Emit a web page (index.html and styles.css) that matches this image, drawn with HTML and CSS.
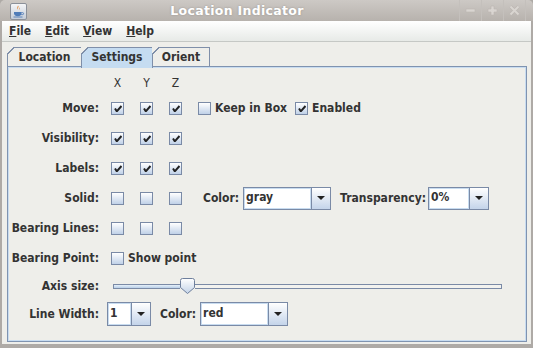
FILE: index.html
```html
<!DOCTYPE html>
<html lang="en">
<head>
    <meta charset="UTF-8">
    <title>Location Indicator</title>
    <link rel="stylesheet" href="styles.css">
</head>
<body>
    <div class="frame">
        <div class="titlebar">
            <div class="app-icon">
                <svg width="17" height="17" viewBox="0 0 17 17">
                    <defs>
                        <linearGradient id="ig" x1="0" y1="0" x2="0" y2="1">
                            <stop offset="0" stop-color="#f6f7f9"/>
                            <stop offset="1" stop-color="#c3cbd6"/>
                        </linearGradient>
                    </defs>
                    <rect x="0.5" y="0.5" width="16" height="16" rx="1.5" fill="url(#ig)" stroke="#8b9099"/>
                    <path d="M8 2.5c1.5 1.2-1 2.5 0.3 4c-1.8-0.8-0.6-2.6-0.3-4z" fill="#e07a1c"/>
                    <path d="M9.6 4.5c0.8 0.8-0.6 1.5 0.2 2.3c-1-0.4-0.5-1.4-0.2-2.3z" fill="#e07a1c"/>
                    <path d="M4 9h7.5v1.6c0 1.6-1.5 2.6-3.7 2.6s-3.8-1-3.8-2.6z" fill="#4f7cb8"/>
                    <path d="M11.4 9.6h1.2a1 1 0 0 1 0 2h-1.4" fill="none" stroke="#4f7cb8" stroke-width="0.9"/>
                    <path d="M3.5 14h9" stroke="#4f7cb8" stroke-width="0.9"/>
                </svg>
            </div>
            <div class="title">Location Indicator</div>
            <div class="wm-buttons">
                <div class="wm-btn">
                    <svg width="11" height="11" viewBox="0 0 11 11"><rect x="1" y="4" width="9" height="3" fill="#d9d5d1" stroke="#bcb7b2" stroke-width="0.6"/></svg>
                </div>
                <div class="wm-btn">
                    <svg width="11" height="11" viewBox="0 0 11 11"><path d="M4 1h3v3h3v3h-3v3h-3v-3h-3v-3h3z" fill="#d9d5d1" stroke="#bcb7b2" stroke-width="0.6"/></svg>
                </div>
                <div class="wm-btn">
                    <svg width="11" height="11" viewBox="0 0 11 11"><path d="M1.5 1.5l8 8M9.5 1.5l-8 8" stroke="#bcb7b2" stroke-width="3.2"/><path d="M1.5 1.5l8 8M9.5 1.5l-8 8" stroke="#d9d5d1" stroke-width="2"/></svg>
                </div>
                <div class="wm-btn end"></div>
            </div>
        </div>

        <div class="client">
            <div class="menubar">
                <span class="menu"><u>F</u>ile</span>
                <span class="menu"><u>E</u>dit</span>
                <span class="menu"><u>V</u>iew</span>
                <span class="menu"><u>H</u>elp</span>
            </div>

            <div class="tabs">
                <div class="tab tab-location">Location</div>
                <div class="tab tab-settings selected">Settings</div>
                <div class="tab tab-orient">Orient</div>
            </div>

            <div class="panel">
                <div class="row head">
                    <div class="lbl"></div>
                    <div class="cbs">
                        <span class="axis">X</span>
                        <span class="axis">Y</span>
                        <span class="axis">Z</span>
                    </div>
                </div>

                <div class="row">
                    <div class="lbl">Move:</div>
                    <div class="cbs">
                        <span class="cb on"></span>
                        <span class="cb on"></span>
                        <span class="cb on"></span>
                    </div>
                    <label class="opt keep"><span class="cb"></span>Keep in Box</label>
                    <label class="opt enabled"><span class="cb on"></span>Enabled</label>
                </div>

                <div class="row">
                    <div class="lbl">Visibility:</div>
                    <div class="cbs">
                        <span class="cb on"></span>
                        <span class="cb on"></span>
                        <span class="cb on"></span>
                    </div>
                </div>

                <div class="row">
                    <div class="lbl">Labels:</div>
                    <div class="cbs">
                        <span class="cb on"></span>
                        <span class="cb on"></span>
                        <span class="cb on"></span>
                    </div>
                </div>

                <div class="row">
                    <div class="lbl">Solid:</div>
                    <div class="cbs">
                        <span class="cb"></span>
                        <span class="cb"></span>
                        <span class="cb"></span>
                    </div>
                    <span class="field-lbl solid-color">Color:</span>
                    <div class="combo color-combo">
                        <span class="val">gray</span>
                        <span class="arr"></span>
                    </div>
                    <span class="field-lbl transp">Transparency:</span>
                    <div class="combo transp-combo">
                        <span class="val">0%</span>
                        <span class="arr"></span>
                    </div>
                </div>

                <div class="row">
                    <div class="lbl">Bearing Lines:</div>
                    <div class="cbs">
                        <span class="cb"></span>
                        <span class="cb"></span>
                        <span class="cb"></span>
                    </div>
                </div>

                <div class="row">
                    <div class="lbl">Bearing Point:</div>
                    <label class="opt point"><span class="cb"></span>Show point</label>
                </div>

                <div class="row axis-row">
                    <div class="lbl">Axis size:</div>
                    <div class="slider">
                        <span class="fill"></span>
                        <svg class="thumb" width="15" height="16" viewBox="0 0 15 16">
                            <defs>
                                <linearGradient id="tg" x1="0" y1="0" x2="0" y2="1">
                                    <stop offset="0" stop-color="#ffffff"/>
                                    <stop offset="1" stop-color="#c3d3e8"/>
                                </linearGradient>
                            </defs>
                            <path d="M2.5 0.5h10a2 2 0 0 1 2 2v7l-7 6l-7-6v-7a2 2 0 0 1 2-2z" fill="url(#tg)" stroke="#6e7f9c"/>
                        </svg>
                        <span class="rest"></span>
                    </div>
                </div>

                <div class="row">
                    <div class="lbl">Line Width:</div>
                    <div class="combo width-combo">
                        <span class="val">1</span>
                        <span class="arr"></span>
                    </div>
                    <span class="field-lbl line-color">Color:</span>
                    <div class="combo line-combo">
                        <span class="val">red</span>
                        <span class="arr"></span>
                    </div>
                </div>
            </div>
        </div>
    </div>
</body>
</html>
```

FILE: styles.css
```css
body {
    margin: 0;
    padding: 0;
    background-color: #aeaaa6;
    font-family: "DejaVu Sans Condensed", "DejaVu Sans", sans-serif;
    font-size: 12px;
    font-weight: bold;
    color: #333333;
}

.frame {
    width: 533px;
    height: 348px;
    display: flex;
    flex-direction: column;
    background-color: #aeaaa6;
    border-radius: 5px 5px 0 0;
    overflow: hidden;
}

/* title bar */
.titlebar {
    height: 21px;
    display: flex;
    align-items: center;
    background: linear-gradient(#cdc9c5, #b7b2ad);
    flex-shrink: 0;
}

.app-icon {
    width: 17px;
    height: 17px;
    margin-left: 10px;
    margin-top: 1px;
}

.title {
    flex: 1;
    text-align: center;
    padding-right: 12px;
    color: #ffffff;
    font-family: "DejaVu Sans", sans-serif;
    font-size: 12.5px;
    letter-spacing: 0.3px;
    text-shadow: 0 0 2px rgba(120, 115, 110, 0.6);
}

.wm-buttons {
    display: flex;
    height: 21px;
}

.wm-btn {
    width: 21px;
    height: 21px;
    border-left: 1px solid #c4c0bc;
    display: flex;
    align-items: center;
    justify-content: center;
}

.wm-btn.end {
    width: 7px;
}

/* window body */
.client {
    flex: 1;
    margin: 0 2px 4px 2px;
    background-color: #eeeeea;
    display: flex;
    flex-direction: column;
}

.menubar {
    height: 20px;
    display: flex;
    align-items: center;
    background: linear-gradient(#ffffff, #e7eae7);
    border-bottom: 1px solid #c5c8c5;
    flex-shrink: 0;
}

.menu {
    padding: 0 7px;
}

/* tabs */
.tabs {
    display: flex;
    margin: 5px 0 0 5px;
    height: 19px;
    position: relative;
    z-index: 1;
}

.tab {
    position: relative;
    height: 19px;
    line-height: 18px;
    box-sizing: border-box;
    border: 1px solid #7f8fa9;
    border-bottom: none;
    text-align: center;
    background-color: #eeeeea;
    margin-right: -1px;
}

.tab::before {
    content: "";
    position: absolute;
    top: -1px;
    left: -1px;
    width: 7px;
    height: 7px;
    background: linear-gradient(to bottom right, #eeeeea 0 44%, #7f8fa9 44% 60%, transparent 60%);
}

.tab-location { width: 75px; }
.tab-settings { width: 72px; }
.tab-orient { width: 58px; }

.tab.selected {
    background-color: #c5dcf1;
    height: 21px;
    margin-bottom: -2px;
}

.panel {
    flex: 1;
    margin: 0 4px 2px 5px;
    border: 1px solid #7f93b0;
    box-shadow: inset 0 0 0 1px #c8dcf0;
    background-color: #eeeeea;
    padding-top: 6px;
    display: flex;
    flex-direction: column;
}

/* rows */
.row {
    display: flex;
    align-items: center;
    height: 30px;
    flex-shrink: 0;
}

.row.head {
    height: 20px;
    font-weight: normal;
}

.row.axis-row {
    height: 26px;
}

.lbl {
    width: 91px;
    text-align: right;
    flex-shrink: 0;
}

.cbs {
    display: flex;
    gap: 16px;
    margin-left: 12px;
}

.axis {
    width: 13px;
    display: flex;
    justify-content: center;
}

.cb {
    width: 13px;
    height: 13px;
    box-sizing: border-box;
    border: 1px solid #7a8aa6;
    background: linear-gradient(#ffffff, #c0d1e8);
    display: inline-block;
    position: relative;
    flex-shrink: 0;
}

.cb.on::after {
    content: "";
    position: absolute;
    left: 2px;
    top: 2px;
    width: 8px;
    height: 7px;
    background: no-repeat center / 8px 7px url("data:image/svg+xml,%3Csvg xmlns='http://www.w3.org/2000/svg' width='8' height='7' viewBox='0 0 8 7'%3E%3Cpath d='M1 3.5L2.8 6.3L7.5 1' fill='none' stroke='%23222' stroke-width='2'/%3E%3C/svg%3E");
}

.opt {
    display: flex;
    align-items: center;
    gap: 4px;
}

.opt.keep { margin-left: 16px; }
.opt.enabled { margin-left: 8px; }
.opt.point { margin-left: 12px; }

.field-lbl.solid-color { margin-left: 21px; }
.field-lbl.transp { margin-left: 9px; }
.field-lbl.line-color { margin-left: 9px; }

/* combo boxes */
.combo {
    display: flex;
    height: 23px;
    box-sizing: border-box;
    border: 1px solid #7a8aa6;
    background-color: #ffffff;
    margin-left: 4px;
}

.combo .val {
    flex: 1;
    padding-left: 2px;
    line-height: 19px;
    box-shadow: inset 0 0 0 1px #c8dcf0;
}

.combo .arr {
    width: 18px;
    border-left: 1px solid #7a8aa6;
    background: linear-gradient(#ffffff, #c4d4ea);
    display: flex;
    align-items: center;
    justify-content: center;
}

.combo .arr::after {
    content: "";
    border-left: 4px solid transparent;
    border-right: 4px solid transparent;
    border-top: 4px solid #222222;
}

.color-combo { width: 88px; }
.transp-combo { width: 61px; margin-left: 2px; }
.width-combo { width: 44px; margin-left: 8px; height: 24px; }
.line-combo { width: 88px; height: 24px; }

.width-combo .val,
.line-combo .val {
    line-height: 20px;
}

/* slider */
.slider {
    display: flex;
    align-items: center;
    width: 389px;
    margin-left: 14px;
    height: 16px;
}

.slider .fill {
    width: 67px;
    height: 5px;
    box-sizing: border-box;
    border: 1px solid #7a8aa6;
    border-right: none;
    background: linear-gradient(#e6eff9, #b8cfe8);
}

.slider .thumb {
    flex-shrink: 0;
}

.slider .rest {
    flex: 1;
    height: 5px;
    box-sizing: border-box;
    border: 1px solid #7a8aa6;
    border-left: none;
    background-color: #f2f2ef;
}
```
